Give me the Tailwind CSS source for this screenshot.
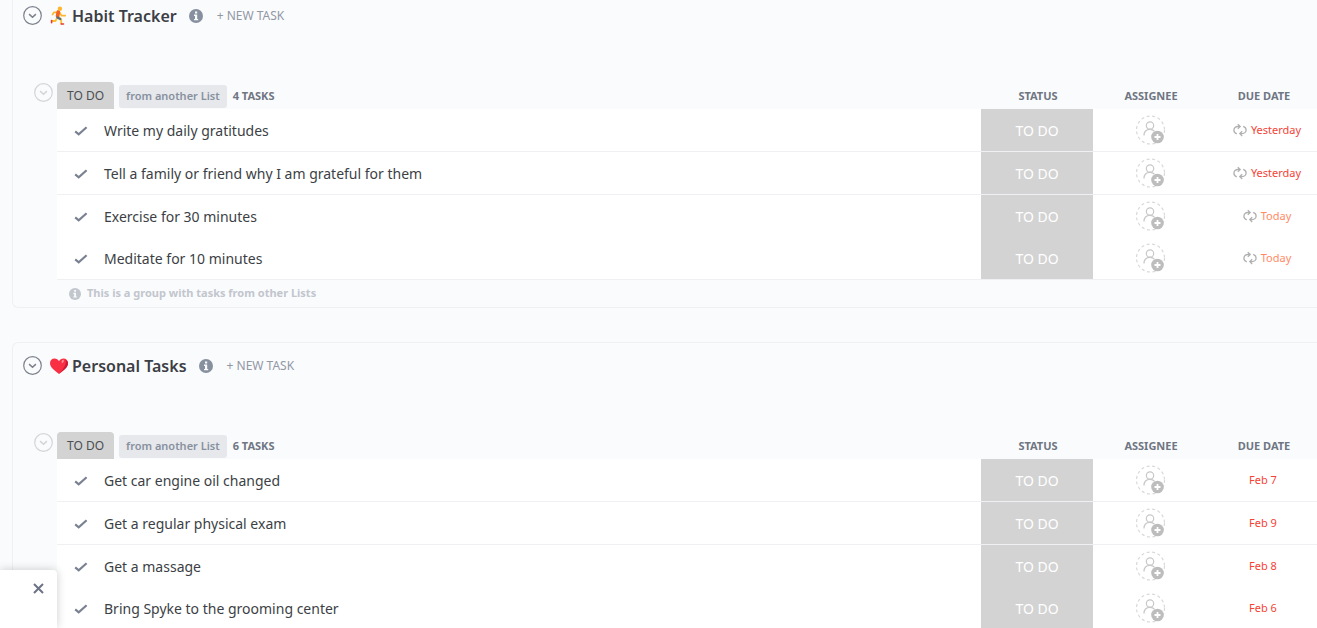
<!DOCTYPE html>
<html lang="en">
<head>
    <meta charset="UTF-8">
    <meta name="viewport" content="width=device-width, initial-scale=1.0">
    <title>Everything - Tasks</title>
    <script src="https://cdn.jsdelivr.net/npm/@tailwindcss/browser@4"></script>
</head>
<body class="h-screen overflow-hidden bg-[#fafbfd] font-['Noto_Sans','Open_Sans',sans-serif] text-[#3c3f45]">

    <!-- Shared icons -->
    <svg class="hidden">
        <symbol id="chevron" viewBox="0 0 20 20">
            <circle cx="9.500" cy="9.500" r="8.800" fill="none" stroke="currentColor" stroke-width="1.200"/>
            <path d="M6.100 8.100 9.500 11.300l3.400-3.200" fill="none" stroke="currentColor" stroke-width="1.500"/>
        </symbol>
        <symbol id="info" viewBox="0 0 14 14">
            <circle cx="7" cy="7" r="7" fill="currentColor"/>
            <path d="M6 2.4h2.2v2H6zM5 5.6h3.2v4.3h1v1.3H5V9.900h1V6.900H5z" fill="#fafbfd"/>
        </symbol>
        <symbol id="check" viewBox="0 0 14 10">
            <path d="M1.200 5.400 4.700 8.300 12.600 1.200" fill="none" stroke="currentColor" stroke-width="2.200"/>
        </symbol>
        <symbol id="assign" viewBox="0 0 30 30">
            <circle cx="14.500" cy="15" r="14" fill="none" stroke="#d9d9d9" stroke-width="1.200" stroke-dasharray="3 2.600"/>
            <circle cx="14" cy="10.500" r="3.700" fill="none" stroke="#c8c8c8" stroke-width="1.200"/>
            <path d="M8 20.500c0-3.500 2-6.200 6-6.200 2 0 3.600.8 4.600 2" fill="none" stroke="#c8c8c8" stroke-width="1.200"/>
            <circle cx="21.500" cy="22" r="6.300" fill="#bdbdbd"/>
            <path d="M21.500 19v6M18.500 22h6" stroke="#fff" stroke-width="1.800"/>
        </symbol>
        <symbol id="repeat" viewBox="0 0 14 14">
            <path d="M3.800 10.800C2 10.200.9 8.900.9 7.200c0-2.300 1.700-3.700 4-3.700h2M4.800 1.200 7.200 3.500 4.800 5.900M10.200 3.300c1.800.6 2.900 1.900 2.900 3.600 0 2.300-1.700 3.700-4 3.700H7M9.200 8.200 6.800 10.600l2.400 2.400" fill="none" stroke="currentColor" stroke-width="1.300"/>
        </symbol>
    </svg>

    <main class="pl-3">

        <!-- Habit Tracker -->
        <section class="rounded-bl-md border-b border-l border-[#eff0f3]">
            <header class="flex h-8 items-center pl-[10px]">
                <button class="text-[#7c828d]" aria-label="Collapse Habit Tracker"><svg class="size-5"><use href="#chevron"/></svg></button>
                <svg class="ml-[7px] h-5 w-[18px]" viewBox="0 0 18 20" fill="none" stroke-linecap="round" stroke-linejoin="round">
                    <path d="M7.500 11 5.500 15H2" stroke="#ffc02e" stroke-width="1.800"/>
                    <path d="M8.500 11l2.700 2.300v4.200" stroke="#ffc02e" stroke-width="1.800"/>
                    <path d="M7 6.300H4L2.500 8.600M9.600 6.500l2 3.200h3.600" stroke="#ffb62e" stroke-width="1.700"/>
                    <path d="M8.300 6 7.600 10" stroke="#f26422" stroke-width="3.800"/>
                    <path d="M7.500 11.500 10.200 13" stroke="#546e8a" stroke-width="2.400"/>
                    <path d="M1.600 14.500v2.300M11.200 18h2.300" stroke="#e53935" stroke-width="1.600"/>
                    <circle cx="9.900" cy="2.800" r="2.200" fill="#ffb62e"/>
                </svg>
                <h2 class="ml-1 text-base font-semibold">Habit Tracker</h2>
                <svg class="ml-3 size-[14px] text-[#87909e]"><use href="#info"/></svg>
                <button class="ml-[14px] text-xs text-[#9198a4]">+ NEW TASK</button>
            </header>

            <div class="mt-[50px] flex items-start pl-[21px]">
                <button class="mt-[1px] text-[#d3d5d9]" aria-label="Collapse group"><svg class="size-5"><use href="#chevron"/></svg></button>
                <div class="ml-[3px] flex-1">
                    <table class="w-full table-fixed border-separate border-spacing-0">
                        <thead>
                            <tr class="h-[27px] text-[11px] font-medium text-[#6f7683]">
                                <th class="p-0 text-left">
                                    <div class="flex h-[27px] items-center">
                                        <span class="flex h-full items-center rounded-t bg-[#d3d3d3] px-[10px] text-xs font-normal text-[#4a4d52]">TO DO</span>
                                        <span class="mt-[2px] ml-[5px] flex h-[23px] items-center rounded-[3px] bg-[#e6e8ec] px-[7px] font-semibold text-[#87909e]">from another List</span>
                                        <span class="mt-[2px] ml-[6px]">4 TASKS</span>
                                    </div>
                                </th>
                                <th class="w-[112px] p-0 pt-[2px] pl-[2px]">STATUS</th>
                                <th class="w-[116px] p-0 pt-[2px]">ASSIGNEE</th>
                                <th class="w-[108px] p-0 pt-[2px] pl-[2px]">DUE DATE</th>
                            </tr>
                        </thead>
                        <tbody>
                            <tr class="h-[43px] bg-white">
                                <td class="border-b border-[#eff0f3] p-0 pt-[2px] pl-[17px]">
                                    <div class="flex items-center gap-4 text-sm"><button class="text-[#7a8191]" aria-label="Complete"><svg class="h-[10px] w-[14px]"><use href="#check"/></svg></button>Write my daily gratitudes</div>
                                </td>
                                <td class="border-b border-[#eff0f3] bg-[#d3d3d3] p-0 pt-[2px] text-center text-sm text-white">TO DO</td>
                                <td class="border-b border-[#eff0f3] p-0"><button class="mx-auto block" aria-label="Assign"><svg class="size-[30px]"><use href="#assign"/></svg></button></td>
                                <td class="border-b border-[#eff0f3] p-0 pl-2 text-[11px] text-[#f44336]">
                                    <div class="flex items-center justify-center gap-1"><svg class="size-[14px] text-[#b0b0b0]"><use href="#repeat"/></svg>Yesterday</div>
                                </td>
                            </tr>
                            <tr class="h-[43px] bg-white">
                                <td class="border-b border-[#eff0f3] p-0 pt-[2px] pl-[17px]">
                                    <div class="flex items-center gap-4 text-sm"><button class="text-[#7a8191]" aria-label="Complete"><svg class="h-[10px] w-[14px]"><use href="#check"/></svg></button>Tell a family or friend why I am grateful for them</div>
                                </td>
                                <td class="border-b border-[#eff0f3] bg-[#d3d3d3] p-0 pt-[2px] text-center text-sm text-white">TO DO</td>
                                <td class="border-b border-[#eff0f3] p-0"><button class="mx-auto block" aria-label="Assign"><svg class="size-[30px]"><use href="#assign"/></svg></button></td>
                                <td class="border-b border-[#eff0f3] p-0 pl-2 text-[11px] text-[#f44336]">
                                    <div class="flex items-center justify-center gap-1"><svg class="size-[14px] text-[#b0b0b0]"><use href="#repeat"/></svg>Yesterday</div>
                                </td>
                            </tr>
                            <tr class="h-[42px] bg-white">
                                <td class="p-0 pt-[2px] pl-[17px]">
                                    <div class="flex items-center gap-4 text-sm"><button class="text-[#7a8191]" aria-label="Complete"><svg class="h-[10px] w-[14px]"><use href="#check"/></svg></button>Exercise for 30 minutes</div>
                                </td>
                                <td class="bg-[#d3d3d3] p-0 pt-[2px] text-center text-sm text-white">TO DO</td>
                                <td class="p-0"><button class="mx-auto block" aria-label="Assign"><svg class="size-[30px]"><use href="#assign"/></svg></button></td>
                                <td class="p-0 pl-2 text-[11px] text-[#ff8a65]">
                                    <div class="flex items-center justify-center gap-1"><svg class="size-[14px] text-[#b0b0b0]"><use href="#repeat"/></svg>Today</div>
                                </td>
                            </tr>
                            <tr class="h-[42px] bg-white">
                                <td class="p-0 pt-[2px] pl-[17px]">
                                    <div class="flex items-center gap-4 text-sm"><button class="text-[#7a8191]" aria-label="Complete"><svg class="h-[10px] w-[14px]"><use href="#check"/></svg></button>Meditate for 10 minutes</div>
                                </td>
                                <td class="bg-[#d3d3d3] p-0 pt-[2px] text-center text-sm text-white">TO DO</td>
                                <td class="p-0"><button class="mx-auto block" aria-label="Assign"><svg class="size-[30px]"><use href="#assign"/></svg></button></td>
                                <td class="p-0 pl-2 text-[11px] text-[#ff8a65]">
                                    <div class="flex items-center justify-center gap-1"><svg class="size-[14px] text-[#b0b0b0]"><use href="#repeat"/></svg>Today</div>
                                </td>
                            </tr>
                        </tbody>
                    </table>
                    <p class="flex h-7 items-center gap-[6px] border-t border-[#eff0f3] pl-3 text-[11px] font-bold text-[#c2c6cd]">
                        <svg class="size-3"><use href="#info"/></svg>This is a group with tasks from other Lists
                    </p>
                </div>
            </div>
        </section>

        <!-- Personal Tasks -->
        <section class="mt-[34px] rounded-tl-md border-t border-l border-[#eff0f3] pt-[7px]">
            <header class="flex h-8 items-center pl-[10px]">
                <button class="text-[#7c828d]" aria-label="Collapse Personal Tasks"><svg class="size-5"><use href="#chevron"/></svg></button>
                <svg class="ml-[7px] h-5 w-[18px]" viewBox="0 0 18 20">
                    <path d="M9 18C5 14.800 0 11.500 0 7.200 0 4.300 2 2.500 4.500 2.500c2 0 3.600 1 4.500 2.700.9-1.700 2.500-2.700 4.500-2.700C16 2.500 18 4.300 18 7.200 18 11.500 13 14.800 9 18z" fill="#f92f44"/>
                    <path d="M15.500 4c1.300 3.500-1 8-6.500 14 4-3.200 9-6.500 9-10.800 0-1.500-.8-2.700-2.500-3.200z" fill="#ca1838"/>
                    <ellipse cx="12.700" cy="5.300" rx="1" ry="1.700" transform="rotate(25 12.700 5.300)" fill="#ff8f98"/>
                </svg>
                <h2 class="ml-1 text-base font-semibold">Personal Tasks</h2>
                <svg class="ml-3 size-[14px] text-[#87909e]"><use href="#info"/></svg>
                <button class="ml-[14px] text-xs text-[#9198a4]">+ NEW TASK</button>
            </header>

            <div class="mt-[50px] flex items-start pl-[21px]">
                <button class="mt-[1px] text-[#d3d5d9]" aria-label="Collapse group"><svg class="size-5"><use href="#chevron"/></svg></button>
                <div class="ml-[3px] flex-1">
                    <table class="w-full table-fixed border-separate border-spacing-0">
                        <thead>
                            <tr class="h-[27px] text-[11px] font-medium text-[#6f7683]">
                                <th class="p-0 text-left">
                                    <div class="flex h-[27px] items-center">
                                        <span class="flex h-full items-center rounded-t bg-[#d3d3d3] px-[10px] text-xs font-normal text-[#4a4d52]">TO DO</span>
                                        <span class="mt-[2px] ml-[5px] flex h-[23px] items-center rounded-[3px] bg-[#e6e8ec] px-[7px] font-semibold text-[#87909e]">from another List</span>
                                        <span class="mt-[2px] ml-[6px]">6 TASKS</span>
                                    </div>
                                </th>
                                <th class="w-[112px] p-0 pt-[2px] pl-[2px]">STATUS</th>
                                <th class="w-[116px] p-0 pt-[2px]">ASSIGNEE</th>
                                <th class="w-[108px] p-0 pt-[2px] pl-[2px]">DUE DATE</th>
                            </tr>
                        </thead>
                        <tbody>
                            <tr class="h-[43px] bg-white">
                                <td class="border-b border-[#eff0f3] p-0 pt-[2px] pl-[17px]">
                                    <div class="flex items-center gap-4 text-sm"><button class="text-[#7a8191]" aria-label="Complete"><svg class="h-[10px] w-[14px]"><use href="#check"/></svg></button>Get car engine oil changed</div>
                                </td>
                                <td class="border-b border-[#eff0f3] bg-[#d3d3d3] p-0 pt-[2px] text-center text-sm text-white">TO DO</td>
                                <td class="border-b border-[#eff0f3] p-0"><button class="mx-auto block" aria-label="Assign"><svg class="size-[30px]"><use href="#assign"/></svg></button></td>
                                <td class="border-b border-[#eff0f3] p-0 text-center text-[11px] text-[#f44336]">Feb 7</td>
                            </tr>
                            <tr class="h-[43px] bg-white">
                                <td class="border-b border-[#eff0f3] p-0 pt-[2px] pl-[17px]">
                                    <div class="flex items-center gap-4 text-sm"><button class="text-[#7a8191]" aria-label="Complete"><svg class="h-[10px] w-[14px]"><use href="#check"/></svg></button>Get a regular physical exam</div>
                                </td>
                                <td class="border-b border-[#eff0f3] bg-[#d3d3d3] p-0 pt-[2px] text-center text-sm text-white">TO DO</td>
                                <td class="border-b border-[#eff0f3] p-0"><button class="mx-auto block" aria-label="Assign"><svg class="size-[30px]"><use href="#assign"/></svg></button></td>
                                <td class="border-b border-[#eff0f3] p-0 text-center text-[11px] text-[#f44336]">Feb 9</td>
                            </tr>
                            <tr class="h-[42px] bg-white">
                                <td class="p-0 pt-[2px] pl-[17px]">
                                    <div class="flex items-center gap-4 text-sm"><button class="text-[#7a8191]" aria-label="Complete"><svg class="h-[10px] w-[14px]"><use href="#check"/></svg></button>Get a massage</div>
                                </td>
                                <td class="bg-[#d3d3d3] p-0 pt-[2px] text-center text-sm text-white">TO DO</td>
                                <td class="p-0"><button class="mx-auto block" aria-label="Assign"><svg class="size-[30px]"><use href="#assign"/></svg></button></td>
                                <td class="p-0 text-center text-[11px] text-[#f44336]">Feb 8</td>
                            </tr>
                            <tr class="h-[42px] bg-white">
                                <td class="p-0 pt-[2px] pl-[17px]">
                                    <div class="flex items-center gap-4 text-sm"><button class="text-[#7a8191]" aria-label="Complete"><svg class="h-[10px] w-[14px]"><use href="#check"/></svg></button>Bring Spyke to the grooming center</div>
                                </td>
                                <td class="bg-[#d3d3d3] p-0 pt-[2px] text-center text-sm text-white">TO DO</td>
                                <td class="p-0"><button class="mx-auto block" aria-label="Assign"><svg class="size-[30px]"><use href="#assign"/></svg></button></td>
                                <td class="p-0 text-center text-[11px] text-[#f44336]">Feb 6</td>
                            </tr>
                        </tbody>
                    </table>
                </div>
            </div>
        </section>
    </main>

    <!-- Corner popup -->
    <aside class="fixed bottom-0 left-0 flex h-[58px] w-[57px] items-start justify-end rounded-tr bg-white pt-[13px] pr-[13px] shadow-[0_0_10px_rgba(0,0,0,0.2)]">
        <button class="text-[#6b7385]" aria-label="Close">
            <svg class="size-[11px]" viewBox="0 0 11 11"><path d="M1 1l9 9M10 1l-9 9" stroke="currentColor" stroke-width="2"/></svg>
        </button>
    </aside>
</body>
</html>
